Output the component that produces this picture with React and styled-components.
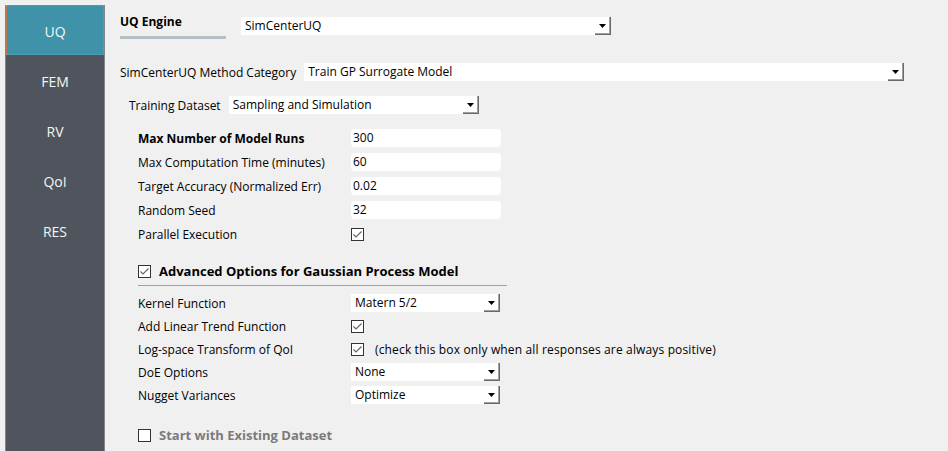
import React from 'react'
import styled, { createGlobalStyle } from 'styled-components'

const GlobalStyle = createGlobalStyle`
    html, body {
        margin: 0;
        padding: 0;
        background: #f0f0f0;
    }
    body {
        font-family: "Open Sans", "Noto Sans", "Liberation Sans", sans-serif;
        font-size: 12px;
        color: #000;
    }
`

const Page = styled.div`
    display: flex;
    align-items: flex-start;
    width: 948px;
    height: 451px;
    padding: 5px 0 0 5px;
    box-sizing: border-box;
    overflow: hidden;
`

const Sidebar = styled.nav`
    width: 100px;
    height: 446px;
    flex-shrink: 0;
    display: flex;
    flex-direction: column;
    background: #50555d;
    border-left: 1px solid #80868d;
    border-right: 1px solid #80868d;
    box-sizing: border-box;
`

const Tab = styled.div`
    height: 50px;
    display: flex;
    align-items: center;
    justify-content: center;
    padding-top: 3px;
    box-sizing: border-box;
    font-size: 14px;
    color: #f4f6f8;
    background: ${p => (p.$active ? '#3f92a7' : 'transparent')};
    outline: ${p => (p.$active ? '1px dotted #c9825c' : 'none')};
    outline-offset: -1px;
`

const Main = styled.div`
    flex: 1;
    display: flex;
    flex-direction: column;
    padding: 9px 0 0 15px;
`

const EngineRow = styled.div`
    display: flex;
    align-items: flex-start;
    gap: 15px;
`

const EngineTab = styled.div`
    width: 106px;
    display: flex;
    flex-direction: column;
    font-weight: 700;
    line-height: 16px;

    &::after {
        content: '';
        display: block;
        height: 3px;
        margin-top: 6px;
        background: #b5bfc6;
    }
`

const Row = styled.div`
    display: flex;
    align-items: center;
    height: 18px;
    margin-top: ${p => p.$top || 0}px;
    padding-left: ${p => p.$indent || 0}px;
`

const Label = styled.span`
    white-space: nowrap;
    margin-right: ${p => p.$gap || 0}px;
    font-weight: ${p => (p.$bold ? 700 : 400)};
    color: ${p => (p.$muted ? '#7b7b7b' : '#000')};
`

const Grid = styled.div`
    display: grid;
    grid-template-columns: 213px auto;
    grid-auto-rows: 18px;
    row-gap: ${p => p.$gap}px;
    align-items: center;
    margin-top: ${p => p.$top}px;
    padding-left: 18px;
`

const Cell = styled.div`
    display: flex;
    align-items: center;
    gap: 11px;
    white-space: nowrap;
    letter-spacing: 0.15px;
`

const ComboBox = styled.div`
    display: flex;
    align-items: stretch;
    width: ${p => p.$width}px;
    height: 18px;
    margin-top: ${p => p.$top || 0}px;
    background: #fff;
    box-sizing: border-box;
`

const ComboText = styled.span`
    flex: 1;
    padding-left: 4px;
    line-height: 18px;
    white-space: nowrap;
    overflow: hidden;
`

const DropButton = styled.span`
    width: 16px;
    display: flex;
    align-items: center;
    justify-content: center;
    background: #fff;
    border-right: 1px solid #6a6a6a;
    border-bottom: 1px solid #6a6a6a;
    box-shadow: inset -1px -1px 0 #a0a0a0;
    box-sizing: border-box;
`

const TextInput = styled.div`
    width: 150px;
    height: 18px;
    padding-left: 2px;
    line-height: 18px;
    background: #fff;
    border-radius: 4px;
    box-sizing: border-box;
`

const Box = styled.span`
    width: 13px;
    height: 13px;
    display: inline-flex;
    align-items: center;
    justify-content: center;
    background: #fff;
    border: 1px solid #333;
    box-sizing: border-box;
    flex-shrink: 0;
`

const SectionHeader = styled.div`
    display: flex;
    align-items: center;
    gap: 8px;
    height: 18px;
    margin-top: ${p => p.$top}px;
    margin-left: 18px;
    font-weight: 700;
    font-size: 13px;
    color: ${p => (p.$muted ? '#7b7b7b' : '#000')};
`

const Divider = styled.hr`
    width: 369px;
    margin: 5px 0 0 18px;
    border: none;
    border-top: 1px solid #a0a0a0;
    height: 0;
`

const Arrow = () => (
    <svg width="7" height="4" viewBox="0 0 7 4">
        <polygon points="0,0 7,0 3.5,4" fill="#000" />
    </svg>
)

const Check = ({ checked }) => (
    <Box>
        {checked && (
            <svg width="11" height="11" viewBox="0 0 11 11">
                <polyline points="1.5,5.5 4,8 9.5,2.5" fill="none" stroke="#666" strokeWidth="1.2" />
            </svg>
        )}
    </Box>
)

const Combo = ({ width, top, children }) => (
    <ComboBox $width={width} $top={top}>
        <ComboText>{children}</ComboText>
        <DropButton><Arrow /></DropButton>
    </ComboBox>
)

const tabs = ['UQ', 'FEM', 'RV', 'QoI', 'RES']

const runFields = [
    { label: 'Max Number of Model Runs', value: '300', bold: true },
    { label: 'Max Computation Time (minutes)', value: '60' },
    { label: 'Target Accuracy (Normalized Err)', value: '0.02' },
    { label: 'Random Seed', value: '32' },
]

const App = () => {
    return (
        <Page>
            <GlobalStyle />
            <Sidebar>
                {tabs.map(t => (
                    <Tab key={t} $active={t === 'UQ'}>{t}</Tab>
                ))}
            </Sidebar>
            <Main>
                <EngineRow>
                    <EngineTab>UQ Engine</EngineTab>
                    <Combo width={370} top={3}>SimCenterUQ</Combo>
                </EngineRow>

                <Row $top={24}>
                    <Label $gap={8}>SimCenterUQ Method Category</Label>
                    <Combo width={600}>Train GP Surrogate Model</Combo>
                </Row>

                <Row $top={15} $indent={9}>
                    <Label $gap={8}>Training Dataset</Label>
                    <Combo width={250}>Sampling and Simulation</Combo>
                </Row>

                <Grid $top={15} $gap={6}>
                    {runFields.map(f => (
                        <React.Fragment key={f.label}>
                            <Label $bold={f.bold}>{f.label}</Label>
                            <TextInput>{f.value}</TextInput>
                        </React.Fragment>
                    ))}
                    <Label>Parallel Execution</Label>
                    <Cell><Check checked /></Cell>
                </Grid>

                <SectionHeader $top={19}>
                    <Check checked />
                    Advanced Options for Gaussian Process Model
                </SectionHeader>
                <Divider />

                <Grid $top={8} $gap={5}>
                    <Label>Kernel Function</Label>
                    <Combo width={149}>Matern 5/2</Combo>
                    <Label>Add Linear Trend Function</Label>
                    <Cell><Check checked /></Cell>
                    <Label>Log-space Transform of QoI</Label>
                    <Cell>
                        <Check checked />
                        (check this box only when all responses are always positive)
                    </Cell>
                    <Label>DoE Options</Label>
                    <Combo width={149}>None</Combo>
                    <Label>Nugget Variances</Label>
                    <Combo width={149}>Optimize</Combo>
                </Grid>

                <SectionHeader $top={22} $muted>
                    <Check />
                    Start with Existing Dataset
                </SectionHeader>
            </Main>
        </Page>
    )
}

export default App
